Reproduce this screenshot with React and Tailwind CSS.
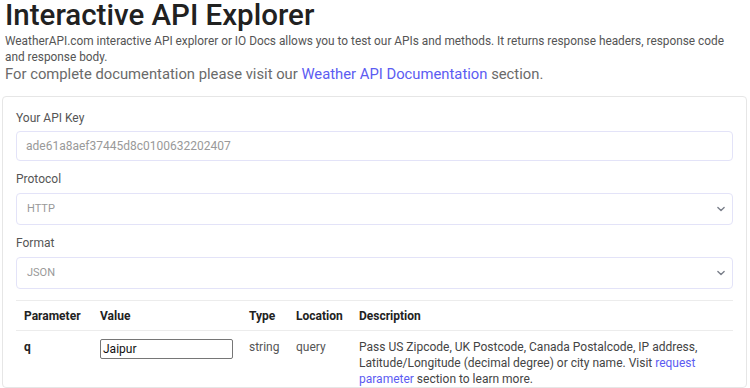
const LINK = "text-[#5c5cf2]";

function Label({ children }) {
  return <label className="block text-[12px] leading-[16px] text-[#555]">{children}</label>;
}

function Chevron() {
  return (
    <svg className="w-[10px] h-[10px] text-[#7a7f8a]" viewBox="0 0 16 16" fill="none" stroke="currentColor" strokeWidth="2.2" strokeLinecap="round" strokeLinejoin="round">
      <path d="M3 5.5l5 5 5-5" />
    </svg>
  );
}

function SelectBox({ value }) {
  return (
    <div className="mt-[6px] h-[32px] border border-[#e3e3f8] rounded-[4px] flex items-center justify-between pl-[10px] pr-[6px]">
      <span className="text-[11px] text-[#999]">{value}</span>
      <Chevron />
    </div>
  );
}

export default function App() {
  return (
    <div className="w-[750px] h-[388px] overflow-hidden bg-white" style={{ fontFamily: 'Roboto, "Liberation Sans", sans-serif' }}>
      <h1 className="text-[29.5px] font-medium leading-[30px] text-[#212121] pl-[5px]">
        Interactive API Explorer
      </h1>
      <p className="text-[11.85px] leading-[16px] text-[#555] px-[5px] mt-[3px]">
        WeatherAPI.com interactive API explorer or IO Docs allows you to test our APIs and methods. It returns response headers, response code and response body.
      </p>
      <p className="text-[14.8px] leading-[18px] text-[#6a6a6a] px-[5px]">
        For complete documentation please visit our <span className={LINK}>Weather API Documentation</span> section.
      </p>
      <div className="ml-[2px] w-[745px] mt-[13px] border border-[#e6e6e6] rounded-[4px] px-[13px] pt-[13px]">
        <Label>Your API Key</Label>
        <div className="mt-[5px] h-[30px] border border-[#e3e3f8] rounded-[4px] flex items-center pl-[9px]">
          <span className="text-[12px] text-[#999]">ade61a8aef37445d8c0100632202407</span>
        </div>
        <div className="mt-[10px]">
          <Label>Protocol</Label>
          <SelectBox value="HTTP" />
        </div>
        <div className="mt-[10px]">
          <Label>Format</Label>
          <SelectBox value="JSON" />
        </div>
        <table className="w-full mt-[11px] border-t border-[#ececec] text-[12px] text-[#333] border-collapse">
          <thead>
            <tr className="border-b border-[#ececec]">
              <th className="text-left font-bold pl-[8px] w-[84px] h-[30px] text-[#222]">Parameter</th>
              <th className="text-left font-bold w-[149px] text-[#222]">Value</th>
              <th className="text-left font-bold w-[47px] text-[#222]">Type</th>
              <th className="text-left font-bold w-[63px] text-[#222]">Location</th>
              <th className="text-left font-bold text-[#222]">Description</th>
            </tr>
          </thead>
          <tbody>
            <tr className="align-top leading-[16px]">
              <td className="pl-[8px] pt-[8px] font-bold text-[#222]">q</td>
              <td className="pt-[8px]">
                <div className="w-[133px] h-[20px] border border-[#767676] rounded-[2px] flex items-center pl-[2px] text-[#111]">Jaipur</div>
              </td>
              <td className="pt-[8px] text-[#555]">string</td>
              <td className="pt-[8px] text-[#555]">query</td>
              <td className="pt-[8px] pr-[30px] text-[#444]">
                Pass US Zipcode, UK Postcode, Canada Postalcode, IP address, Latitude/Longitude (decimal degree) or city name. Visit <span className={LINK}>request parameter</span> section to learn more.
              </td>
            </tr>
          </tbody>
        </table>
      </div>
    </div>
  );
}
